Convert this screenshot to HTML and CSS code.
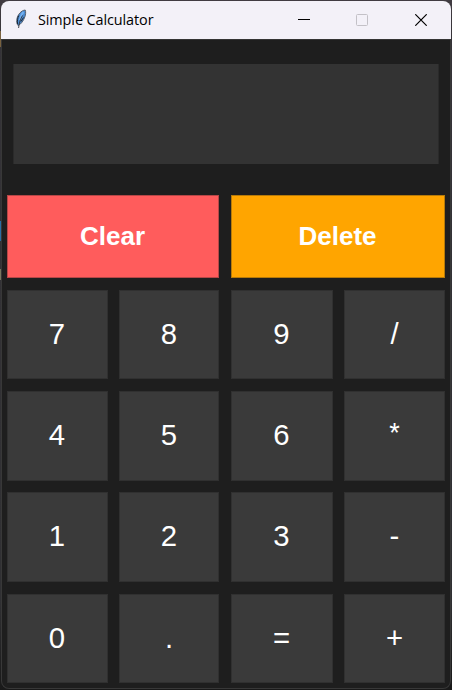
FILE: index.html
```html
<!DOCTYPE html>
<html lang="en">
<head>
<meta charset="utf-8">
<title>Simple Calculator</title>
<link rel="stylesheet" href="styles.css">
</head>
<body>
<div class="window">
  <header class="titlebar">
    <svg class="feather" width="12" height="21" viewBox="0 0 12 21">
      <path d="M10.200 1C6 1.500 3 5.500 2 9.500C1.400 12.500 1.800 15 3 16.500C6 15.500 8.500 11.500 9.800 8C10.700 5.500 11 3 10.200 1Z" fill="#4b8bd2" stroke="#59616d" stroke-width="1"/>
      <path d="M3.800 6.500C2.500 9 2.200 12 2.600 15M8.500 8.500L6 12.500" stroke="#182636" stroke-width="1" fill="none"/>
      <path d="M8.500 3C6.500 5 5.500 8 4.900 11" stroke="#75b1f0" stroke-width="1.800" fill="none"/>
      <path d="M7.500 6.500C5.500 10 4 14 3.600 19" stroke="#30343c" stroke-width=".9" fill="none"/>
    </svg>
    <h1 class="title">Simple Calculator</h1>
    <div class="controls">
      <svg width="12" height="12" viewBox="0 0 12 12"><path d="M0 5.500H12" stroke="#000"/></svg>
      <svg width="12" height="12" viewBox="0 0 12 12"><rect x=".5" y=".5" width="11" height="11" rx="1" fill="none" stroke="#c3c1c7"/></svg>
      <svg width="12" height="12" viewBox="0 0 12 12"><path d="M.3.300L11.700 11.700M11.700.300L.3 11.700" stroke="#000" stroke-width="1.200"/></svg>
    </div>
  </header>
  <main class="client">
    <div class="display"></div>
    <div class="actions">
      <button class="key clear">Clear</button>
      <button class="key delete">Delete</button>
    </div>
    <div class="keypad">
      <button class="key first">7</button><button class="key first second">8</button><button class="key first">9</button><button class="key first">/</button>
      <button class="key">4</button><button class="key second">5</button><button class="key">6</button><button class="key times">*</button>
      <button class="key">1</button><button class="key second">2</button><button class="key">3</button><button class="key">-</button>
      <button class="key last">0</button><button class="key last second">.</button><button class="key last">=</button><button class="key last">+</button>
    </div>
  </main>
</div>
</body>
</html>
```
FILE: styles.css
```css
* { box-sizing: border-box; }

body {
  margin: 0;
  width: 452px;
  height: 690px;
  padding: 1px;
  overflow: hidden;
  background:
    linear-gradient(#79623f, #79623f) 0 31px / 1px 16px no-repeat,
    linear-gradient(#2b6ea5, #2b6ea5) 0 221px / 1px 20px no-repeat,
    linear-gradient(#77775f, #77775f) 0 269px / 1px 11px no-repeat,
    linear-gradient(#413c42, #353338 40px, #303033 600px, #191919);
}

.window {
  width: 450px;
  height: 688px;
  border-radius: 8px;
  overflow: hidden;
  background: #383838;
}

.titlebar {
  display: flex;
  align-items: center;
  height: 38px;
  padding-left: 14px;
  padding-right: 24px;
  background: #f3f1f8;
}

.feather { flex: none; margin-bottom: 2px; }

.title {
  margin: 0 0 0 11px;
  font: 400 14.4px/20px "Open Sans", "Noto Sans", sans-serif;
  letter-spacing: -0.08px;
  white-space: nowrap;
  color: #000;
}

.controls {
  display: flex;
  gap: 46px;
  margin-left: auto;
}

.controls svg { display: block; }
.controls svg:nth-child(2) { margin-right: 1px; }

.client {
  margin: 0 1px;
  height: 649px;
  padding: 24px 5px 0;
  border-top: 1px solid #353535;
  border-radius: 0 0 7px 7px;
  background: #1e1e1e;
}

.display {
  height: 100px;
  margin: 0 6px 31px;
  border: solid #2a2a2a;
  border-width: 0 1px;
  background: #333;
}

.actions {
  display: grid;
  grid-template-columns: 212px 214px;
  gap: 12px;
  height: 83px;
  margin-bottom: 12px;
}

.keypad {
  display: grid;
  grid-template-columns: 101px 101px 102px 101px;
  grid-template-rows: repeat(4, 90px);
  gap: 11px;
}

.key {
  display: flex;
  align-items: center;
  justify-content: center;
  margin: 0;
  padding: 0 1px 2px 0;
  border: 1px solid #303030;
  border-radius: 0;
  background: #3a3a3a;
  color: #fff;
  font: 29.33px "Liberation Sans", Arial, sans-serif;
}

.keypad .key:nth-child(even) { padding-right: 0; }

.actions .key {
  padding: 0 1px 0 0;
  font-size: 26px;
  font-weight: 700;
}

.clear { background: #ff5c5c; border-color: #b64747; }
.delete { background: #ffa500; border-color: #b67a09; }

.times { padding-bottom: 5px; font-size: 27px; }

.first { margin-bottom: 1px; }
.second { margin-right: 1px; }
.last { margin-top: 1px; }
```
